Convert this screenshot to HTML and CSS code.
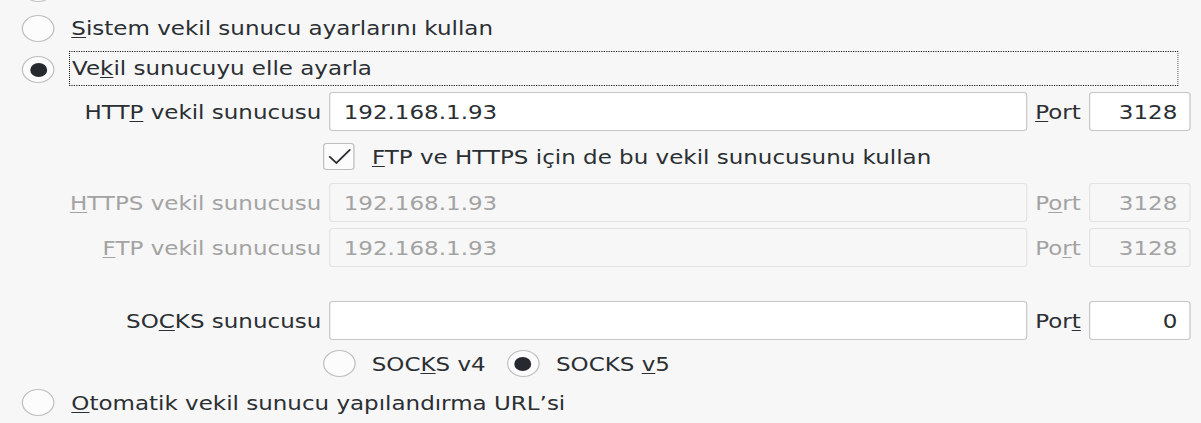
FILE: index.html
```html
<!DOCTYPE html>
<html lang="tr">
<head>
<meta charset="utf-8">
<title>Vekil sunucu ayarları</title>
<link rel="stylesheet" href="styles.css">
</head>
<body>
<div class="page">
  <div class="option opt-none">
    <span class="radio"></span>
  </div>
  <div class="option opt-system">
    <span class="radio"></span>
    <span class="text"><u>S</u>istem vekil sunucu ayarlarını kullan</span>
  </div>
  <div class="option opt-manual">
    <span class="radio checked"></span>
    <span class="focus">Ve<u>k</u>il sunucuyu elle ayarla</span>
  </div>

  <div class="proxy">
    <div class="field f-http">
      <label class="lbl">HTT<u>P</u> vekil sunucusu</label>
      <input class="inp" type="text" value="192.168.1.93">
      <label class="port-lbl"><u>P</u>ort</label>
      <input class="inp port" type="text" value="3128">
    </div>
    <div class="sub-row f-check">
      <span class="check">
        <svg viewBox="0 0 26 27" width="26" height="27"><path d="M5.5 13.8 L11 20 L22 7" fill="none" stroke="#2b2f33" stroke-width="1.7" stroke-linecap="round" stroke-linejoin="round"/></svg>
      </span>
      <span class="text"><u>F</u>TP ve HTTPS için de bu vekil sunucusunu kullan</span>
    </div>
    <div class="field f-https disabled">
      <label class="lbl"><u>H</u>TTPS vekil sunucusu</label>
      <input class="inp" type="text" value="192.168.1.93" disabled>
      <label class="port-lbl">P<u>o</u>rt</label>
      <input class="inp port" type="text" value="3128" disabled>
    </div>
    <div class="field f-ftp disabled">
      <label class="lbl"><u>F</u>TP vekil sunucusu</label>
      <input class="inp" type="text" value="192.168.1.93" disabled>
      <label class="port-lbl">Po<u>r</u>t</label>
      <input class="inp port" type="text" value="3128" disabled>
    </div>
    <div class="field f-socks">
      <label class="lbl">SO<u>C</u>KS sunucusu</label>
      <input class="inp" type="text" value="">
      <label class="port-lbl">Por<u>t</u></label>
      <input class="inp port" type="text" value="0">
    </div>
    <div class="sub-row f-ver">
      <span class="radio"></span>
      <span class="text">SOC<u>K</u>S v4</span>
      <span class="radio checked v5"></span>
      <span class="text">SOCKS <u>v</u>5</span>
    </div>
  </div>

  <div class="option opt-auto">
    <span class="radio"></span>
    <span class="text"><u>O</u>tomatik vekil sunucu yapılandırma URL’si</span>
  </div>
</div>
</body>
</html>
```

FILE: styles.css
```css
html, body {
  margin: 0;
  padding: 0;
  background: #f7f7f7;
  overflow: hidden;
}

.page {
  width: 993px;
  height: 423px;
  transform: scaleX(1.21);
  transform-origin: 0 0;
  font-family: "DejaVu Sans", sans-serif;
  font-size: 19px;
  color: #2b2f33;
  display: flex;
  flex-direction: column;
}

u {
  text-decoration-thickness: 1px;
  text-underline-offset: 2px;
}

.option {
  display: flex;
  align-items: center;
  padding-left: 18.4px;
  white-space: nowrap;
}

.option .text {
  margin-left: 13.6px;
}

.opt-none {
  height: 40px;
  margin-top: -32px;
}

.opt-system {
  height: 40px;
}

.opt-manual {
  height: 35px;
  margin-top: 2.5px;
}

.opt-manual .radio {
  margin-top: 3px;
}

.opt-auto {
  height: 27px;
  margin-top: 12px;
}

.radio {
  width: 27px;
  height: 27px;
  box-sizing: border-box;
  border: 1px solid #bdbdbd;
  border-radius: 50%;
  background: #fcfcfc;
  flex: none;
  display: flex;
  align-items: center;
  justify-content: center;
}

.radio.checked::after {
  content: "";
  width: 14px;
  height: 14px;
  border-radius: 50%;
  background: #262a2e;
}

.focus {
  margin-left: 11.6px;
  width: 916.6px;
  height: 35px;
  box-sizing: border-box;
  border: 1px dotted #1a1a1a;
  border-radius: 1px;
  padding-left: 1.5px;
  display: flex;
  align-items: center;
}

.proxy {
  display: flex;
  flex-direction: column;
}

.field {
  display: grid;
  grid-template-columns: 265.5px 577px 38px 84px;
  column-gap: 6.5px;
  align-items: center;
  height: 39px;
  white-space: nowrap;
}

.lbl {
  justify-self: end;
}

.inp {
  height: 39px;
  width: 100%;
  box-sizing: border-box;
  margin: 0;
  border: 1px solid #c6c6c6;
  border-radius: 3px;
  background: #ffffff;
  padding: 0 10px 0 11px;
  font: inherit;
  color: #2b2f33;
  outline: none;
}

.inp.port {
  text-align: right;
}

.disabled {
  color: #a3a3a3;
}

.disabled .inp {
  background: #f7f7f7;
  border-color: #e3e3e3;
  color: #a3a3a3;
}

.f-http {
  margin-top: 6.5px;
}

.f-https {
  margin-top: 13px;
}

.f-ftp {
  margin-top: 6px;
}

.f-socks {
  margin-top: 34px;
}

.sub-row {
  display: flex;
  align-items: center;
  height: 27px;
  padding-left: 266.7px;
  white-space: nowrap;
}

.f-check {
  margin-top: 12px;
}

.f-check .text {
  margin-left: 14.7px;
}

.check {
  width: 26px;
  height: 27px;
  box-sizing: border-box;
  border: 1px solid #bdbdbd;
  border-radius: 3px;
  background: #fcfcfc;
  flex: none;
  position: relative;
}

.check svg {
  position: absolute;
  left: -1px;
  top: -1px;
}

.f-ver {
  margin-top: 10px;
}

.f-ver .text {
  margin-left: 13.5px;
}

.f-ver .v5 {
  margin-left: 17.6px;
}
```
